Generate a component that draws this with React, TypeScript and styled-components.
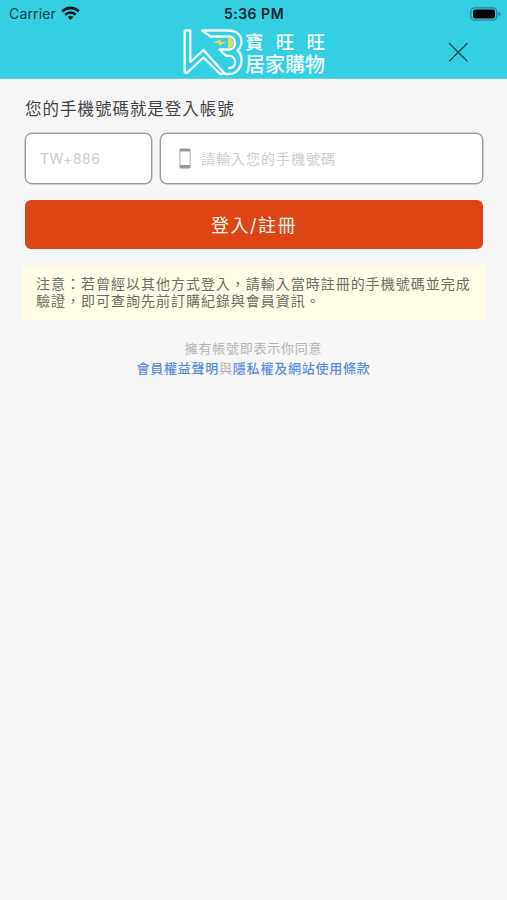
import React from "react";
import styled, { createGlobalStyle } from "styled-components";

const Global = createGlobalStyle`
  * { box-sizing: border-box; }
  html, body { margin: 0; padding: 0; background: #f6f6f6; }
  body, button, input { font-family: Inter, "Noto Sans CJK TC", sans-serif; }
`;
const Screen = styled.div`
  width: 507px;
  height: 900px;
  overflow: hidden;
  background: #f6f6f6;
`;
const Top = styled.header`
  height: 79px;
  background: #35cfe4;
  border-bottom: 1px solid #5fd8e9;
`;
const StatusBar = styled.div`
  height: 27px;
  display: grid;
  grid-template-columns: 1fr auto 1fr;
  padding: 0 6px 0 9px;
  align-items: center;
`;
const Carrier = styled.div`
  display: flex;
  align-items: center;
  gap: 5px;
  font-size: 14px;
  line-height: 27px;
  letter-spacing: 0.15px;
  color: #0b3f47;
`;
const Clock = styled.div`
  font-size: 14px;
  font-weight: 600;
  line-height: 27px;
  letter-spacing: 0.5px;
  margin-right: 2px;
  color: #06252a;
`;
const Battery = styled.svg`
  justify-self: end;
`;
const NavBar = styled.div`
  height: 51px;
  display: grid;
  grid-template-columns: 183px 1fr 72px;
`;
const Logo = styled.div`
  grid-column: 2;
  display: flex;
`;
const LogoMark = styled.svg`
  flex: none;
`;
const LogoText = styled.div`
  display: grid;
  grid-template-rows: 22px 24px;
  align-content: start;
  padding-top: 3.5px;
  width: 80px;
  color: #f4fdff;
  font-weight: 500;
  white-space: nowrap;
`;
const LogoTop = styled.div`
  display: flex;
  justify-content: space-between;
  font-size: 18.5px;
  line-height: 22px;
`;
const LogoBottom = styled.div`
  font-size: 20px;
  line-height: 24px;
`;
const Close = styled.button`
  border: 0;
  padding: 15px 0 0 13px;
  background: none;
  display: flex;
  align-items: flex-start;
`;
const Form = styled.main`
  padding: 19px 25px 0;
`;
const Heading = styled.h1`
  margin: 0;
  height: 35px;
  font-size: 16.5px;
  line-height: 22px;
  font-weight: 400;
  letter-spacing: 0.98px;
  color: #444;
`;
const Fields = styled.div`
  display: grid;
  grid-template-columns: 127px 323px;
  gap: 8px;
`;
const Field = styled.label<{ $pad: number }>`
  height: 51px;
  display: flex;
  align-items: center;
  padding: 0 14px 0 ${(p) => p.$pad}px;
  gap: 10px;
  border: 1.5px solid #999;
  border-radius: 7px;
  background: #fff;
  box-shadow: 0 0 0 0.5px #aaa;
`;
const Input = styled.input<{ $latin?: boolean }>`
  border: 0;
  outline: 0;
  padding: 0;
  min-width: 0;
  flex: 1;
  background: none;
  font-size: 14px;
  letter-spacing: ${(p) => (p.$latin ? 0.5 : 1)}px;
  &::placeholder { color: #ccc; opacity: 1; }
`;
const Submit = styled.button`
  display: block;
  width: 458px;
  height: 49px;
  margin-top: 16px;
  padding: 0 0 1px;
  border: 0;
  border-radius: 6px;
  background: #de4514;
  color: #fff3ec;
  font-size: 18px;
  letter-spacing: 1.5px;
`;
const Notice = styled.p`
  margin: 16px -4px 0 -3px;
  height: 55px;
  padding: 10px 14px 0 14px;
  background: #fffce8;
  color: #6d6d66;
  font-size: 14px;
  line-height: 17px;
  letter-spacing: 0.99px;
  white-space: nowrap;
`;
const Terms = styled.p`
  margin: 18px 0 0;
  text-align: center;
  font-size: 13px;
  line-height: 20px;
  letter-spacing: 0.77px;
  color: #b5b5b5;
`;
const Link = styled.a`
  color: #5a8edb;
  font-weight: 500;
`;

export default function App() {
  return (
    <>
      <Global />
      <Screen>
        <Top>
          <StatusBar>
            <Carrier>
              Carrier
              <svg width="19" height="15" viewBox="0 0 19 15" fill="none" stroke="#04171a" strokeWidth="2.7">
                <path d="M1.2 5.4C6 .7 13 .7 17.8 5.4M4.2 8.8c3.1-2.9 7.5-2.9 10.6 0" />
                <path d="M6.7 11Q9.5 8.7 12.3 11L9.5 13.9Z" fill="#04171a" stroke="none" />
              </svg>
            </Carrier>
            <Clock>5:36 PM</Clock>
            <Battery width="31" height="14" viewBox="0 0 31 14">
              <rect x=".8" y=".8" width="26" height="12.4" rx="3.8" fill="none" stroke="#1f8a98" strokeWidth="1.3" />
              <rect x="3" y="2.6" width="22" height="9" rx="2" fill="#000" />
              <path d="M28.5 4.5q2 .8 2 2.5t-2 2.5z" fill="#1f8a98" />
            </Battery>
          </StatusBar>
          <NavBar>
            <Logo>
              <LogoMark width="62" height="50" viewBox="0 0 62 50" fill="none" stroke="#f4fdff" strokeWidth="2.3" strokeLinejoin="round" strokeLinecap="round">
                <path d="M46 41H47C54 41 54 28.800 46 28.800H43L36.500 22.500H46C54 22.500 54 9.500 46 9.500H27.500L19 3.500H45C54 3.500 58.500 8.500 58.500 14.500C58.500 18.500 57 21 54.500 23.500C57.500 26 58.500 29 58.500 33C58.500 41 53.500 47 46 47H42L20.500 23L7.300 35V3.500H1.700V45.500H4.500L20.500 30.500L37 47H39.500" />
                <path d="M45 10.6C52 10.6 52 21.4 45 21.4Z" fill="#eed553" stroke="none" />
                <path d="M29.5 15.8L38 12.3L37.5 14.8H43.500L35.500 19.300L36.300 16.300Z" fill="#eed553" stroke="none" />
              </LogoMark>
              <LogoText>
                <LogoTop><span>寶</span><span>旺</span><span>旺</span></LogoTop>
                <LogoBottom>居家購物</LogoBottom>
              </LogoText>
            </Logo>
            <Close aria-label="關閉">
              <svg width="21" height="21" viewBox="0 0 21 21" stroke="#124a52" strokeWidth="1.3">
                <path d="M1 1L19.5 19.5M19.5 1L1 19.5" />
              </svg>
            </Close>
          </NavBar>
        </Top>
        <Form>
          <Heading>您的手機號碼就是登入帳號</Heading>
          <Fields>
            <Field $pad={14}><Input $latin placeholder="TW+886" /></Field>
            <Field $pad={18}>
              <svg width="12" height="21" viewBox="0 0 12 21">
                <rect x=".5" y=".5" width="11" height="20" rx="1.5" fill="#999" />
                <rect x="1.3" y="3.5" width="9.4" height="13.5" fill="#fff" />
              </svg>
              <Input placeholder="請輸入您的手機號碼" />
            </Field>
          </Fields>
          <Submit>登入/註冊</Submit>
          <Notice>
            注意：若曾經以其他方式登入，請輸入當時註冊的手機號碼並完成
            <br />
            驗證，即可查詢先前訂購紀錄與會員資訊。
          </Notice>
          <Terms>
            擁有帳號即表示你同意
            <br />
            <Link>會員權益聲明</Link>與<Link>隱私權及網站使用條款</Link>
          </Terms>
        </Form>
      </Screen>
    </>
  );
}
